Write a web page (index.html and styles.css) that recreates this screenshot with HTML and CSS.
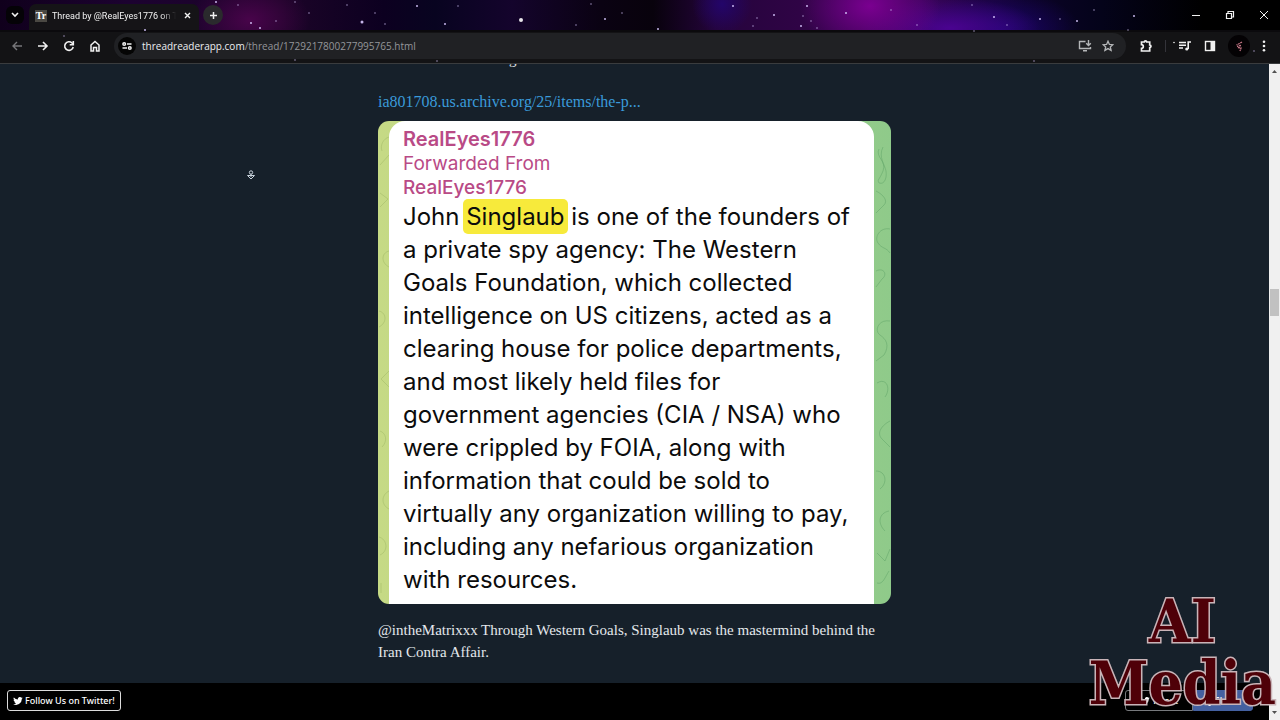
FILE: index.html
```html
<!DOCTYPE html>
<html lang="en">
  <head>
    <meta charset="UTF-8" />
    <meta name="viewport" content="width=device-width, initial-scale=1.0" />
    <title>Thread by @RealEyes1776</title>
    <link rel="stylesheet" href="styles.css">
  </head>
  <body>
    <header class="browser">
      <!-- Starry theme behind the tabs -->
      <svg class="stars" width="1280" height="64" fill="#d9c8ff" aria-hidden="true">
        <g opacity="0.9">
          <circle cx="521" cy="20" r="2" fill="#fff" />
          <circle cx="362" cy="22" r="1.5" />
          <circle cx="251" cy="23" r="1" />
          <circle cx="260" cy="28" r="1" />
          <circle cx="216" cy="2" r="1" />
          <circle cx="417" cy="6" r="1" />
          <circle cx="445" cy="24" r="1" />
          <circle cx="605" cy="19" r="1" />
          <circle cx="658" cy="29" r="1" />
          <circle cx="733" cy="6" r="1" />
          <circle cx="774" cy="15" r="1" />
          <circle cx="801" cy="26" r="1" />
          <circle cx="807" cy="6" r="1" />
          <circle cx="846" cy="13" r="1" />
          <circle cx="994" cy="17" r="1" />
          <circle cx="1040" cy="19" r="1" />
          <circle cx="1077" cy="21" r="1" />
          <circle cx="1134" cy="16" r="1" />
          <circle cx="145" cy="30" r="1" />
        </g>
        <g opacity="0.4">
          <circle cx="238" cy="5" r="1" />
          <circle cx="276" cy="21" r="1" />
          <circle cx="295" cy="2" r="1" />
          <circle cx="309" cy="13" r="1" />
          <circle cx="347" cy="5" r="1" />
          <circle cx="375" cy="13" r="1" />
          <circle cx="385" cy="24" r="1" />
          <circle cx="458" cy="6" r="1" />
          <circle cx="591" cy="4" r="1" />
          <circle cx="622" cy="13" r="1" />
          <circle cx="576" cy="25" r="1" />
          <circle cx="757" cy="18" r="1" />
          <circle cx="753" cy="26" r="1" />
          <circle cx="803" cy="16" r="1" />
          <circle cx="811" cy="21" r="1" />
          <circle cx="817" cy="28" r="1" />
          <circle cx="891" cy="10" r="1" />
          <circle cx="917" cy="25" r="1" />
          <circle cx="972" cy="5" r="1" />
          <circle cx="974" cy="31" r="1" />
          <circle cx="1007" cy="25" r="1" />
          <circle cx="1060" cy="19" r="1" />
          <circle cx="1094" cy="10" r="1" />
          <circle cx="1128" cy="30" r="1" />
          <circle cx="64" cy="36" r="1" />
          <circle cx="295" cy="60" r="1" />
          <circle cx="437" cy="61" r="1" />
          <circle cx="1034" cy="61" r="1" />
          <circle cx="1254" cy="51" r="1" />
        </g>
      </svg>

      <div class="tab-strip">
        <button class="tab-search" aria-label="Search tabs">
          <svg width="8" height="6" viewBox="0 0 8 6" fill="none" stroke="currentColor" stroke-width="1.6"><path d="M1 1l3 3 3-3" /></svg>
        </button>
        <div class="tab">
          <span class="favicon">Tr</span>
          <span class="tab-title">Thread by @RealEyes1776 on Th</span>
          <button class="icon-button" aria-label="Close tab">
            <svg width="7" height="7" viewBox="0 0 7 7" stroke="currentColor" stroke-width="1.4"><path d="M1 1l5 5M6 1L1 6" /></svg>
          </button>
        </div>
        <button class="new-tab" aria-label="New tab">
          <svg width="9" height="9" viewBox="0 0 9 9" stroke="currentColor" stroke-width="1.5"><path d="M4.500 1v7M1 4.500h7" /></svg>
        </button>
        <div class="window-controls">
          <button class="icon-button" aria-label="Minimize">
            <svg width="10" height="10" viewBox="0 0 10 10" stroke="currentColor"><path d="M1 5.500h8" /></svg>
          </button>
          <button class="icon-button" aria-label="Restore">
            <svg width="10" height="10" viewBox="0 0 10 10" fill="none" stroke="currentColor" stroke-width="1.2"><path d="M1.500 3.500h5v5h-5zM3 3.500V1.500h5.500V7H6.500" /></svg>
          </button>
          <button class="icon-button" aria-label="Close">
            <svg width="10" height="10" viewBox="0 0 10 10" stroke="currentColor"><path d="M1 1l8 8M9 1L1 9" /></svg>
          </button>
        </div>
      </div>

      <div class="toolbar">
        <div class="nav">
          <button class="icon-button dim" aria-label="Back">
            <svg width="12" height="12" viewBox="0 0 12 12" fill="none" stroke="currentColor" stroke-width="1.4"><path d="M11 6H2M6 2L2 6l4 4" /></svg>
          </button>
          <button class="icon-button" aria-label="Forward">
            <svg width="12" height="12" viewBox="0 0 12 12" fill="none" stroke="currentColor" stroke-width="1.6"><path d="M1 6h9M6 2l4 4-4 4" /></svg>
          </button>
          <button class="icon-button" aria-label="Reload">
            <svg width="12" height="12" viewBox="0 0 12 12" fill="none" stroke="currentColor" stroke-width="1.6"><path d="M10.200 7A4.300 4.300 0 1 1 9 3l1 1" /><path d="M10.300 1v3.700H6.700" /></svg>
          </button>
          <button class="icon-button" aria-label="Home">
            <svg width="12" height="12" viewBox="0 0 12 12" fill="none" stroke="currentColor" stroke-width="1.5"><path d="M2 5l4-3.500L10 5v6H7.500V7.500h-3V11H2z" /></svg>
          </button>
        </div>
        <div class="address">
          <button class="site-info" aria-label="Site information">
            <svg width="10" height="10" viewBox="0 0 10 10" fill="none" stroke="currentColor" stroke-width="1.5"><circle cx="2.200" cy="3" r="1.300" /><path d="M5 3h4.500M.5 7H5" /><circle cx="7.800" cy="7" r="1.300" /></svg>
          </button>
          <a class="url" href="#"><b>threadreaderapp.com</b>/thread/1729217800277995765.html</a>
          <button class="icon-button grey" aria-label="Install app">
            <svg width="14" height="12" viewBox="0 0 14 12" fill="none" stroke="currentColor" stroke-width="1.4"><path d="M7.500 1.500H1.500v7h11V7M5 10.700h4M10.500 0v5.200M8.200 3.200l2.300 2.300 2.300-2.300" /></svg>
          </button>
          <button class="icon-button grey" aria-label="Bookmark">
            <svg width="12" height="12" viewBox="0 0 12 12" fill="none" stroke="currentColor" stroke-width="1.3"><path d="M6 1.200l1.400 3.200 3.500.3-2.600 2.300.8 3.400L6 8.600l-3.100 1.800.8-3.400L1.100 4.700l3.500-.3z" /></svg>
          </button>
        </div>
        <div class="extensions">
          <button class="icon-button" aria-label="Extensions">
            <svg width="14" height="14" viewBox="0 0 14 14" fill="none" stroke="currentColor" stroke-width="1.7"><path d="M2.500 3h2.800a1.200 1.200 0 0 1 2.400 0h3v3a1.200 1.200 0 0 1 0 2.600V12H2.500V9.300a1.800 1.800 0 0 0 0-3.600z" /></svg>
          </button>
          <span class="divider"></span>
          <button class="icon-button" aria-label="Media">
            <svg width="20" height="12" viewBox="0 0 20 12" fill="none" stroke="currentColor" stroke-width="1.600"><path d="M7 2.500h7M7 5.200h7M7 8h4M16.200 9V2H19" /><circle cx="14.800" cy="9" r="1.600" fill="currentColor" stroke="none" /><circle cx="2" cy="2.500" r="0.800" fill="currentColor" stroke="none" /></svg>
          </button>
          <button class="icon-button" aria-label="Side panel">
            <svg width="12" height="12" viewBox="0 0 12 12"><rect x="1.500" y="1.500" width="9" height="9" fill="none" stroke="currentColor" stroke-width="1.400" /><path d="M6.500 1h4.500v10H6.500z" fill="currentColor" /></svg>
          </button>
          <button class="avatar" aria-label="Profile">
            <svg width="12" height="12" viewBox="0 0 12 12" fill="none" stroke="#c87888" stroke-width="1.300"><path d="M9 2L6.500 3.500 3.500 5M8 5.500L4 6.500M5 7.500l3 .5-1 3" stroke-dasharray="2 0.600" /></svg>
          </button>
          <button class="icon-button" aria-label="Menu">
            <svg width="4" height="12" viewBox="0 0 4 12" fill="currentColor"><circle cx="2" cy="1.800" r="1.300" /><circle cx="2" cy="6" r="1.300" /><circle cx="2" cy="10.200" r="1.300" /></svg>
          </button>
        </div>
      </div>
    </header>

    <div class="viewport">
      <div class="page">
        <main class="thread">
          <article class="content">
            <p class="previous">g</p>
            <p><a class="source" href="#">ia801708.us.archive.org/25/items/the-p...</a></p>
            <figure class="shot">
              <svg class="doodles doodles-left" width="11" height="482" viewBox="0 0 11 482" fill="none" stroke="#9fb866" stroke-opacity="0.5" aria-hidden="true">
                <path d="M11 16c-6 2-9 8-7 14M11 34L2 44M2 72l8 6-8 8M11 130c-8 2-8 12 0 16M1 190c8 2 8 12 0 16M11 250l-8 8 8 8M2 310c6 2 8 10 2 16M11 370c-8 4-8 14 0 18M1 416c8 2 10 14 1 18M3 462v10" />
              </svg>
              <svg class="doodles" width="16" height="482" viewBox="0 0 16 482" fill="none" stroke="#5fa468" stroke-opacity="0.5" aria-hidden="true">
                <path d="M4 28c-4 8 8 12 4 22s-6 8-4 12c6 2 8-6 7-12S3 36 8 26M1 70c8 4 12 10 8 14L1 92M15 108c-10-2-16 8-12 14s8 4 12 10M1 150c8-4 12 4 6 8l-6 8M15 200c-12-2-16 10-10 14s10 10 4 20l-8 6M2 262c10-6 14 6 8 14M15 300c-8 4-14 12-8 18l8 8M1 350c10 0 12 12 4 18M14 390c-10 2-12 12-4 20M2 432l8 8 5-12M2 462c6 2 8-6 12-12" />
              </svg>
              <div class="bubble">
                <p class="sender">RealEyes1776</p>
                <p class="forwarded">Forwarded From<br /><b>RealEyes1776</b></p>
                <p class="message">
                  John <mark>Singlaub</mark> is one of the founders of<br />
                  a private spy agency: The Western<br />
                  Goals Foundation, which collected<br />
                  intelligence on US citizens, acted as a<br />
                  clearing house for police departments,<br />
                  and most likely held files for<br />
                  government agencies (CIA / NSA) who<br />
                  were crippled by FOIA, along with<br />
                  information that could be sold to<br />
                  virtually any organization willing to pay,<br />
                  including any nefarious organization<br />
                  with resources.
                </p>
              </div>
            </figure>
            <p class="tweet">@intheMatrixxx Through Western Goals, Singlaub was the mastermind behind the Iran Contra Affair.</p>
          </article>
          <svg class="cursor" width="8" height="10" viewBox="0 0 8 10" fill="none" stroke="#c9d3dc" aria-hidden="true"><circle cx="4" cy="2.500" r="1.700" /><path d="M.5 5.500h7L4 9zM4 4v3" /></svg>
        </main>
        <footer class="share-bar">
          <button class="share-button">
            <svg width="10" height="8" viewBox="0 0 24 20" fill="currentColor"><path d="M24 2.400a10 10 0 0 1-2.800.8A5 5 0 0 0 23.300.5a10 10 0 0 1-3.100 1.200A4.900 4.900 0 0 0 11.800 6.200 14 14 0 0 1 1.700 1a4.900 4.900 0 0 0 1.500 6.600A5 5 0 0 1 1 7c0 2.400 1.700 4.400 4 4.900a5 5 0 0 1-2.300.1 4.900 4.900 0 0 0 4.600 3.400A10 10 0 0 1 0 17.400 14 14 0 0 0 21.500 5z" /></svg>
            Follow Us on Twitter!
          </button>
          <div class="share-group">
            <button class="share-button tweet-button">
              <svg width="10" height="8" viewBox="0 0 24 20" fill="currentColor"><path d="M24 2.400a10 10 0 0 1-2.800.8A5 5 0 0 0 23.300.5a10 10 0 0 1-3.100 1.200A4.900 4.900 0 0 0 11.800 6.200 14 14 0 0 1 1.700 1a4.900 4.900 0 0 0 1.500 6.600A5 5 0 0 1 1 7c0 2.400 1.700 4.400 4 4.900a5 5 0 0 1-2.300.1 4.900 4.900 0 0 0 4.600 3.400A10 10 0 0 1 0 17.400 14 14 0 0 0 21.500 5z" /></svg>
              Tweet
            </button>
            <button class="share-button facebook-button">
              <svg width="6" height="10" viewBox="0 0 6 10" fill="currentColor"><path d="M1.500 10V5.500H0V3.700h1.500V2.500C1.500 1 2.400 0 4 0h1.500v1.800h-1c-.7 0-.9.3-.9.900v1h1.900l-.3 1.800H3.600V10z" /></svg>
              Share
            </button>
          </div>
        </footer>
      </div>
      <div class="scrollbar" aria-hidden="true">
        <svg width="5" height="4" viewBox="0 0 5 4" fill="#505050"><path d="M0 4l2.500-3L5 4z" /></svg>
        <span class="thumb"></span>
        <svg width="5" height="4" viewBox="0 0 5 4" fill="#505050"><path d="M0 0l2.500 3L5 0z" /></svg>
      </div>
    </div>

    <div class="watermark">AI<br />Media</div>
  </body>
</html>
```

FILE: styles.css
```css
* {
  box-sizing: border-box;
}
body {
  margin: 0;
  height: 100vh;
  display: flex;
  flex-direction: column;
  overflow: hidden;
  background-color: #16202a;
  color: #e4e8ec;
  font-family: "Liberation Serif", serif;
}
p,
figure {
  margin: 0;
}
button {
  display: flex;
  align-items: center;
  justify-content: center;
  padding: 0;
  border: 0;
  background: none;
  color: #f1f1f1;
  font-family: inherit;
}

/* Browser window */
.browser {
  position: relative;
  flex: none;
  font-family: "Open Sans", sans-serif;
  border-bottom: 1px solid #3a3c3e;
  background:
    radial-gradient(ellipse 70px 50px at 870px 6px, #7a0090, transparent),
    radial-gradient(ellipse 90px 30px at 950px 28px, #4a0390, transparent),
    radial-gradient(ellipse 80px 40px at 1000px 30px, #1c046e, transparent),
    radial-gradient(ellipse 30px 30px at 722px 4px, #23056a, transparent),
    radial-gradient(ellipse 60px 40px at 250px 20px, #48044a, transparent),
    linear-gradient(
      90deg,
      #10001c 0%,
      #1c0230 10%,
      #1c0428 22%,
      #0c0020 30%,
      #080420 34%,
      #14042c 40%,
      #0a0212 47%,
      #08020c 51%,
      #25043c 56%,
      #300446 63%,
      #38045a 72%,
      #0c0328 80%,
      #04031a 86%,
      #000 94%
    );
}
.stars {
  position: absolute;
  left: 0;
  top: 0;
}
.tab-strip {
  display: flex;
  align-items: center;
  height: 30px;
  padding: 0 11px 0 6px;
}
.tab-search {
  width: 18px;
  height: 18px;
  border-radius: 6px;
  background-color: #050307;
}
.tab {
  display: flex;
  align-items: center;
  align-self: flex-end;
  width: 170px;
  height: 26px;
  margin-left: 5px;
  padding: 0 8px 3px 6px;
  border-radius: 7px 7px 0 0;
  background-color: #151417;
}
.favicon {
  width: 12px;
  height: 12px;
  background-color: #4a4843;
  color: #fff;
  font: bold 10px/12px "Liberation Serif", serif;
  text-align: center;
}
.tab-title {
  flex: 1;
  margin: 0 8px 0 5px;
  overflow: hidden;
  white-space: nowrap;
  color: #f1f1f1;
  font-family: Roboto, sans-serif;
  font-size: 9px;
  line-height: 14px;
  -webkit-mask-image: linear-gradient(90deg, #000 88%, transparent);
  mask-image: linear-gradient(90deg, #000 88%, transparent);
}
.new-tab {
  width: 20px;
  height: 20px;
  margin-left: 4px;
  border-radius: 50%;
  background-color: #2a2a2d;
}
.window-controls {
  display: flex;
  gap: 24px;
  margin-left: auto;
}
.toolbar {
  display: flex;
  align-items: center;
  height: 33px;
  padding: 0 14px 4px 11px;
  border-top: 2px solid #0b0a0d;
  background-color: #131315;
}
.nav {
  display: flex;
  gap: 14px;
}
.dim {
  color: #77777a;
}
.grey {
  color: #b4b6b8;
}
.address {
  display: flex;
  flex: 1;
  align-items: center;
  gap: 10px;
  height: 26px;
  margin: 0 13px;
  padding: 0 12px 0 4px;
  border-radius: 13px;
  background-color: #202124;
}
.site-info {
  width: 18px;
  height: 18px;
  border-radius: 50%;
  background-color: #050505;
}
.url {
  flex: 1;
  margin-left: -4px;
  color: #94969a;
  font-size: 10px;
  text-decoration: none;
}
.url b {
  color: #eceef0;
  font-weight: normal;
}
.extensions {
  display: flex;
  align-items: center;
  gap: 12px;
}
.divider {
  width: 1px;
  height: 12px;
  margin-right: -6px;
  background-color: #34343a;
}
.avatar {
  width: 22px;
  height: 22px;
  border-radius: 50%;
  background-color: #040204;
}

/* Page */
.viewport {
  display: flex;
  flex: 1;
  min-height: 0;
}
.page {
  display: flex;
  flex: 1;
  flex-direction: column;
  min-width: 0;
}
.thread {
  position: relative;
  flex: 1;
  min-height: 0;
  overflow: hidden;
}
.content {
  width: 513px;
  margin: 0 auto;
  font-size: 15px;
  line-height: 22px;
}
.previous {
  margin-top: -16px;
  margin-bottom: 21px;
  padding-left: 131px;
}
.source {
  color: #3a9ad9;
  font-size: 16px;
  text-decoration: none;
}
.shot {
  position: relative;
  margin: 8px 0 15px;
  padding: 0 17px 0 11px;
  border-radius: 11px;
  background: linear-gradient(90deg, #c6da85, #8fca8a);
}
.doodles {
  position: absolute;
  right: 0;
  top: 0;
}
.doodles-left {
  right: auto;
  left: 0;
}
.bubble {
  padding: 6px 14px 8px;
  border-radius: 16px 16px 0 0;
  background-color: #fff;
  color: #0c0c0c;
  font-family: Inter, sans-serif;
}
.sender {
  color: #b94a86;
  font-size: 20px;
  font-weight: 600;
  line-height: 25px;
}
.forwarded {
  color: #b94a86;
  font-size: 19px;
  line-height: 24px;
}
.forwarded b {
  font-weight: 500;
}
.message {
  font-size: 24px;
  line-height: 33px;
  white-space: nowrap;
}
mark {
  margin: 0 -3px;
  padding: 3px;
  border-radius: 5px;
  background-color: #f7ea3b;
  color: inherit;
}
.cursor {
  position: absolute;
  left: 247px;
  top: 106px;
}

/* Bottom bar */
.share-bar {
  display: flex;
  align-items: center;
  justify-content: space-between;
  height: 37px;
  padding: 0 16px 2px 7px;
  background-color: #000;
  font-family: "Noto Sans", sans-serif;
}
.share-button {
  gap: 2px;
  height: 21px;
  padding: 0 5px;
  border: 1px solid #dcdcdc;
  border-radius: 3px;
  color: #fff;
  font-size: 9px;
  font-weight: 500;
}
.share-group {
  display: flex;
}
.tweet-button {
  width: 68px;
  border-color: #77797c;
  border-radius: 3px 0 0 3px;
}
.facebook-button {
  width: 60px;
  border-color: #4460a0;
  border-radius: 0 3px 3px 0;
  background-color: #4460a0;
}
.scrollbar {
  display: flex;
  flex-direction: column;
  align-items: center;
  width: 11px;
  padding: 5px 0;
  background-color: #f0f0f0;
}
.thumb {
  width: 9px;
  height: 27px;
  margin: 216px 0 auto;
  background-color: #c1c1c1;
}

/* Channel name over the corner of the page */
.watermark {
  position: absolute;
  right: 4px;
  bottom: 6px;
  color: #4f0008;
  font: bold 60px/62px "DejaVu Serif Condensed", "DejaVu Serif", serif;
  text-align: center;
  paint-order: stroke fill;
  -webkit-text-stroke: 3px #c9b4b8;
}
```
